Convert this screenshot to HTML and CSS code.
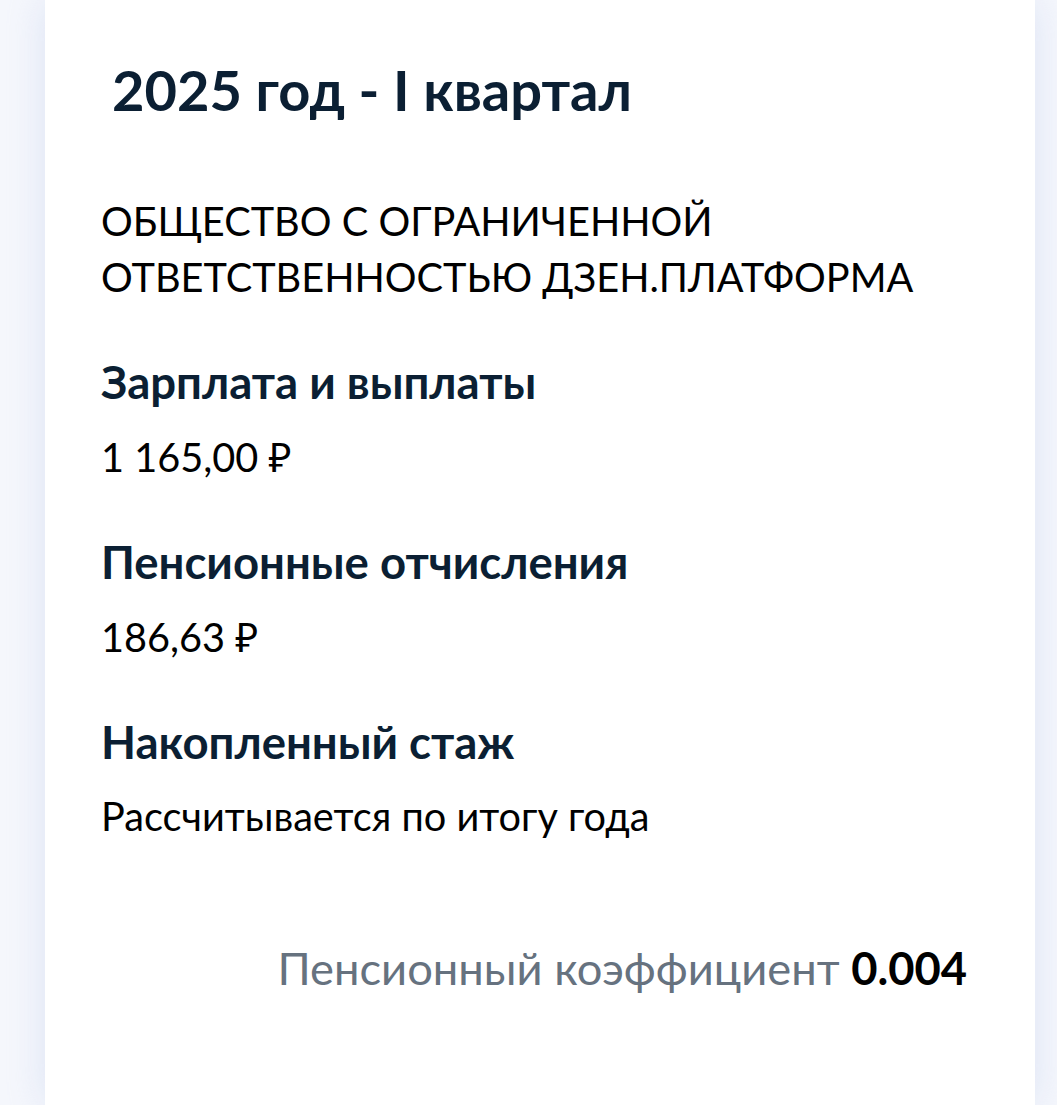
FILE: index.html
```html
<!DOCTYPE html>
<html lang="ru">
<head>
  <meta charset="UTF-8" />
  <meta name="viewport" content="width=device-width, initial-scale=1.0"/>
  <title>Сведения о стаже - 2025 год</title>
  <link rel="stylesheet" href="styles.css">
</head>
<body>

  <div class="card">
    <h1 class="period-title">2025 год - I квартал</h1>

    <p class="employer">ОБЩЕСТВО С ОГРАНИЧЕННОЙ ОТВЕТСТВЕННОСТЬЮ ДЗЕН.ПЛАТФОРМА</p>

    <div class="info-block">
      <h3>Зарплата и выплаты</h3>
      <p>1 165,00 ₽</p>
    </div>

    <div class="info-block">
      <h3>Пенсионные отчисления</h3>
      <p>186,63 ₽</p>
    </div>

    <div class="info-block">
      <h3>Накопленный стаж</h3>
      <p>Рассчитывается по итогу года</p>
    </div>

    <div class="coefficient">
      Пенсионный коэффициент <b>0.004</b>
    </div>
  </div>

</body>
</html>
```

FILE: styles.css
```css
body {
  font-family: Lato, 'Noto Sans', sans-serif;
  background: #f5f7fc;
  margin: 0;
  padding: 0;
}

.card {
  background: white;
  margin: 0 22px 0 45px;
  padding: 54px 68px 0 56px;
  min-height: 1105px;
  box-sizing: border-box;
  box-shadow: 0 0 36px rgba(190, 205, 238, 0.45);
}

.period-title {
  margin: 0;
  padding-left: 11px;
  font-size: 56px;
  line-height: 72px;
  font-weight: 700;
  color: #0b1f33;
}

.employer {
  margin: 66.5px 0 0;
  font-size: 39.7px;
  line-height: 56.4px;
  color: #000;
}

.info-block {
  margin-top: 49px;
}

.info-block h3 {
  margin: 0;
  font-size: 45.5px;
  line-height: 56.4px;
  font-weight: 700;
  color: #0b1f33;
}

.info-block p {
  margin: 18px 0 0;
  font-size: 39.7px;
  line-height: 56.4px;
  color: #000;
}

.coefficient {
  margin-top: 95px;
  text-align: right;
  font-size: 45.3px;
  line-height: 56.4px;
  color: #66727f;
}

.coefficient b {
  color: #000;
  font-weight: 700;
}
```
